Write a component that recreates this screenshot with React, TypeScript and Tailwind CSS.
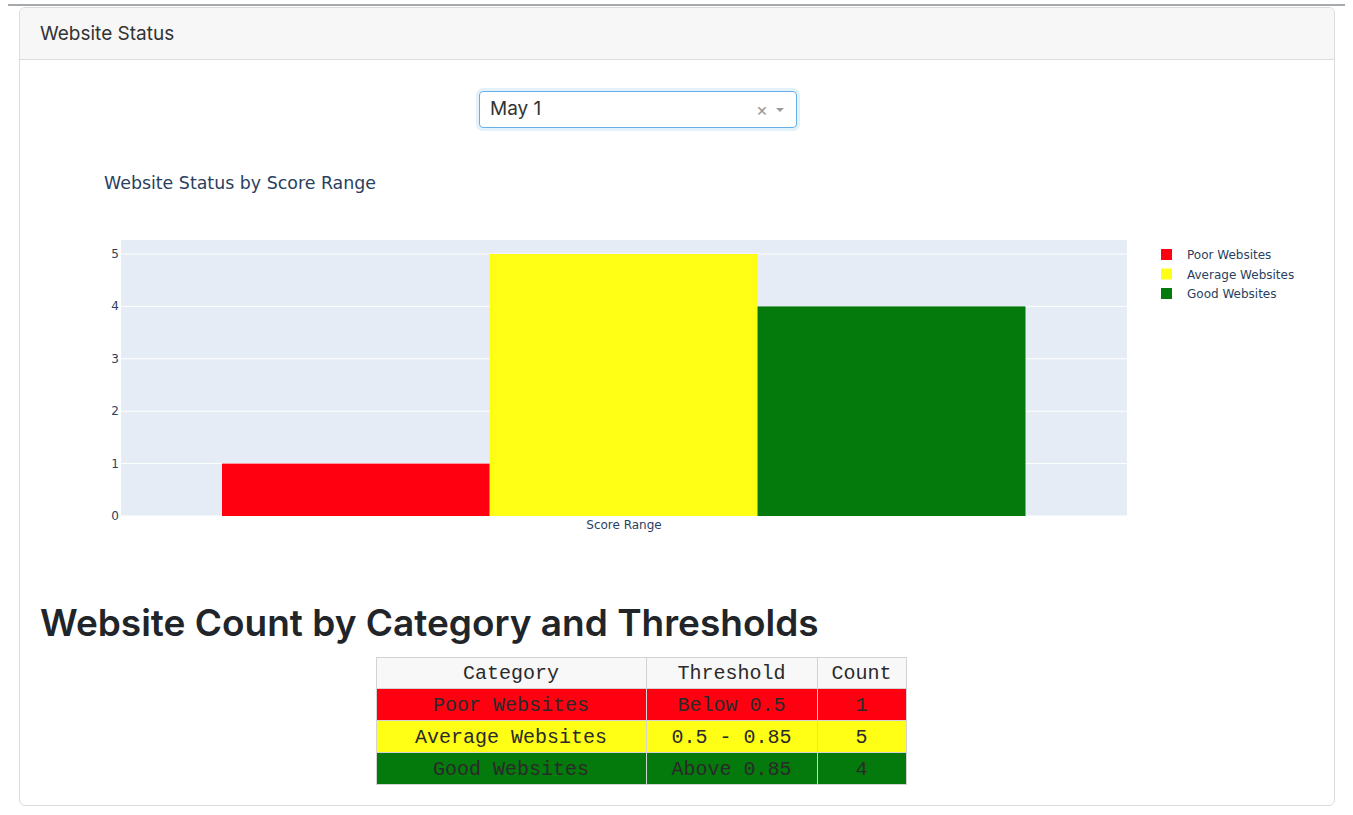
import { FC } from "react";

type Row = { category: string; threshold: string; count: number; bg: string };

const rows: Array<Row> = [
  { category: "Poor Websites", threshold: "Below 0.5", count: 1, bg: "bg-[#ff0011]" },
  { category: "Average Websites", threshold: "0.5 - 0.85", count: 5, bg: "bg-[#ffff16]" },
  { category: "Good Websites", threshold: "Above 0.85", count: 4, bg: "bg-[#04790c]" },
];

const bars = [
  { name: "Poor Websites", value: 1, color: "#ff0011" },
  { name: "Average Websites", value: 5, color: "#ffff16" },
  { name: "Good Websites", value: 4, color: "#04790c" },
];

// chart drawn in page coordinates (viewBox starts at the svg's page offset)
const StatusChart: FC = () => {
  const left = 121;
  const right = 1127;
  const top = 240;
  const zero = 516;
  const step = 52.4;
  const barX = [222, 489.5, 757.5];
  const barW = 268;

  return (
    <svg
      width={1274}
      height={420}
      viewBox="40 150 1274 420"
      className="block"
      style={{ fontFamily: '"DejaVu Sans", Verdana, sans-serif' }}
    >
      <text x={104} y={189} fontSize={17.4} fill="#2a3f5f">
        Website Status by Score Range
      </text>
      <rect x={left} y={top} width={right - left} height={zero - top} fill="#e5ecf6" />
      {[0, 1, 2, 3, 4, 5].map((t) => (
        <g key={t}>
          <line
            x1={left}
            x2={right}
            y1={zero - t * step}
            y2={zero - t * step}
            stroke="#ffffff"
            strokeWidth={1}
          />
          <text
            x={119}
            y={zero - t * step + 4}
            fontSize={12}
            fill="#2a3f5f"
            textAnchor="end"
          >
            {t}
          </text>
        </g>
      ))}
      {bars.map((b, i) => (
        <rect
          key={b.name}
          x={barX[i]}
          y={zero - b.value * step}
          width={barW}
          height={b.value * step}
          fill={b.color}
        />
      ))}
      <text x={624} y={529} fontSize={12} fill="#2a3f5f" textAnchor="middle">
        Score Range
      </text>
      {bars.map((b, i) => (
        <g key={b.name}>
          <rect x={1161} y={249 + i * 19.5} width={11} height={11} fill={b.color} />
          <text x={1187} y={259 + i * 19.5} fontSize={12} fill="#2a3f5f">
            {b.name}
          </text>
        </g>
      ))}
    </svg>
  );
};

const App: FC = () => {
  return (
    <div className="min-h-screen bg-white pt-[4px]" style={{ fontFamily: '"Inter", "Liberation Sans", sans-serif' }}>
      <div className="mx-[8px] h-[2px] bg-[#a4aaad]" />

      <div className="ml-[19px] mt-[1px] w-[1316px] rounded-[6px] border border-[#dcdcdc]">
        <div className="flex h-[52px] items-center rounded-t-[6px] border-b border-[#dcdcdc] bg-[#f7f7f7] px-[20px] pt-[2px] text-[19px] text-[#333]">
          Website Status
        </div>

        <div className="px-[20px] pb-[20px]">
          <div className="flex justify-center pr-[78px] pt-[31px]">
            <div className="flex h-[37px] w-[318px] items-center rounded-[4px] border border-[#66afe9] pl-[10px] pr-[12px] shadow-[0_0_0_3px_rgba(102,175,233,0.18)]">
              <span className="flex-1 text-[19px] text-[#333]">May 1</span>
              <span className="mr-[8px] text-[18px] leading-none text-[#999]">×</span>
              <span className="h-0 w-0 border-x-[4px] border-t-[4px] border-x-transparent border-t-[#999]" />
            </div>
          </div>

          <div className="mt-[22px]">
            <StatusChart />
          </div>

          <h1 className="mt-[30px] text-[37px] font-semibold leading-[46px] text-[#212529]">
            Website Count by Category and Thresholds
          </h1>

          <div className="mt-[11px] flex justify-center pr-[72px]">
            <table
              className="border-collapse text-[20px] leading-[24px] text-[#2a2a2a]"
              style={{ fontFamily: '"Liberation Mono", "Courier New", monospace' }}
            >
              <thead>
                <tr className="h-[31px] bg-[#f8f8f8]">
                  <th className="w-[270px] border border-[#d3d3d3] pt-[2px] font-normal">Category</th>
                  <th className="w-[171px] border border-[#d3d3d3] pt-[2px] font-normal">Threshold</th>
                  <th className="w-[89px] border border-[#d3d3d3] pt-[2px] font-normal">Count</th>
                </tr>
              </thead>
              <tbody>
                {rows.map((r) => (
                  <tr key={r.category} className={`h-[32px] ${r.bg}`}>
                    <td className="border border-[#d3d3d3] pt-[2px] text-center">{r.category}</td>
                    <td className="border border-[#d3d3d3] pt-[2px] text-center">{r.threshold}</td>
                    <td className="border border-[#d3d3d3] pt-[2px] text-center">{r.count}</td>
                  </tr>
                ))}
              </tbody>
            </table>
          </div>
        </div>
      </div>
    </div>
  );
};

export default App;
